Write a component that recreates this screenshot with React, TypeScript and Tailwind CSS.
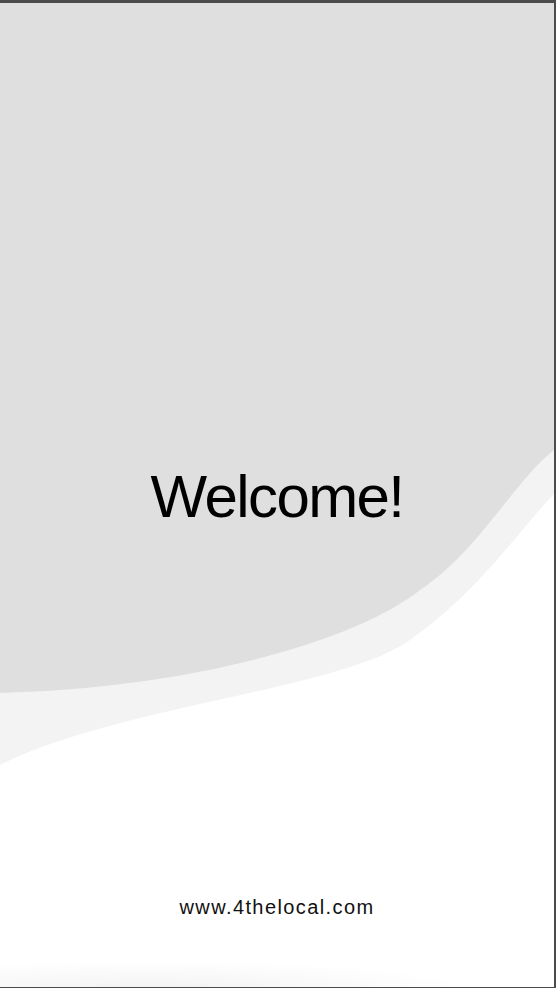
import React from "react";

export default function App() {
  return (
    <div className="w-[556px] h-[988px] bg-white border-t-[3px] border-r-2 border-b border-[#4b4b4b] overflow-hidden">
      <div className="relative w-full h-full flex flex-col items-center">
        <svg
          className="absolute inset-0 w-full h-full"
          viewBox="0 3 554 984"
          preserveAspectRatio="none"
        >
          <defs>
            <radialGradient id="sh" cx="150" cy="990" r="330" gradientUnits="userSpaceOnUse" gradientTransform="translate(0 990) scale(1 0.09) translate(0 -990)">
              <stop offset="0" stopColor="#000" stopOpacity="0.05" />
              <stop offset="1" stopColor="#000" stopOpacity="0" />
            </radialGradient>
          </defs>
          <path
            d="M0,3 L554,3 L554,494 C515,535 480,590 410,640 C340,690 120,705 0,765 Z"
            fill="#f3f3f3"
          />
          <path
            d="M0,3 L554,3 L554,450 C515,480 478,552 420,590 C360,638 200,688 0,693 Z"
            fill="#dfdfdf"
          />
          <rect x="0" y="940" width="554" height="50" fill="url(#sh)" />
        </svg>
        <h1
          className="relative mt-[459px] text-[60px] leading-[70px] tracking-[-1.6px] text-black"
          style={{ fontFamily: '"Liberation Sans", Arial, sans-serif' }}
        >
          Welcome!
        </h1>
        <p
          className="relative mt-auto mb-[68px] text-[20px] leading-[24px] tracking-[1.4px] text-[#111]"
          style={{ fontFamily: '"Liberation Sans", Arial, sans-serif' }}
        >
          www.4thelocal.com
        </p>
      </div>
    </div>
  );
}
